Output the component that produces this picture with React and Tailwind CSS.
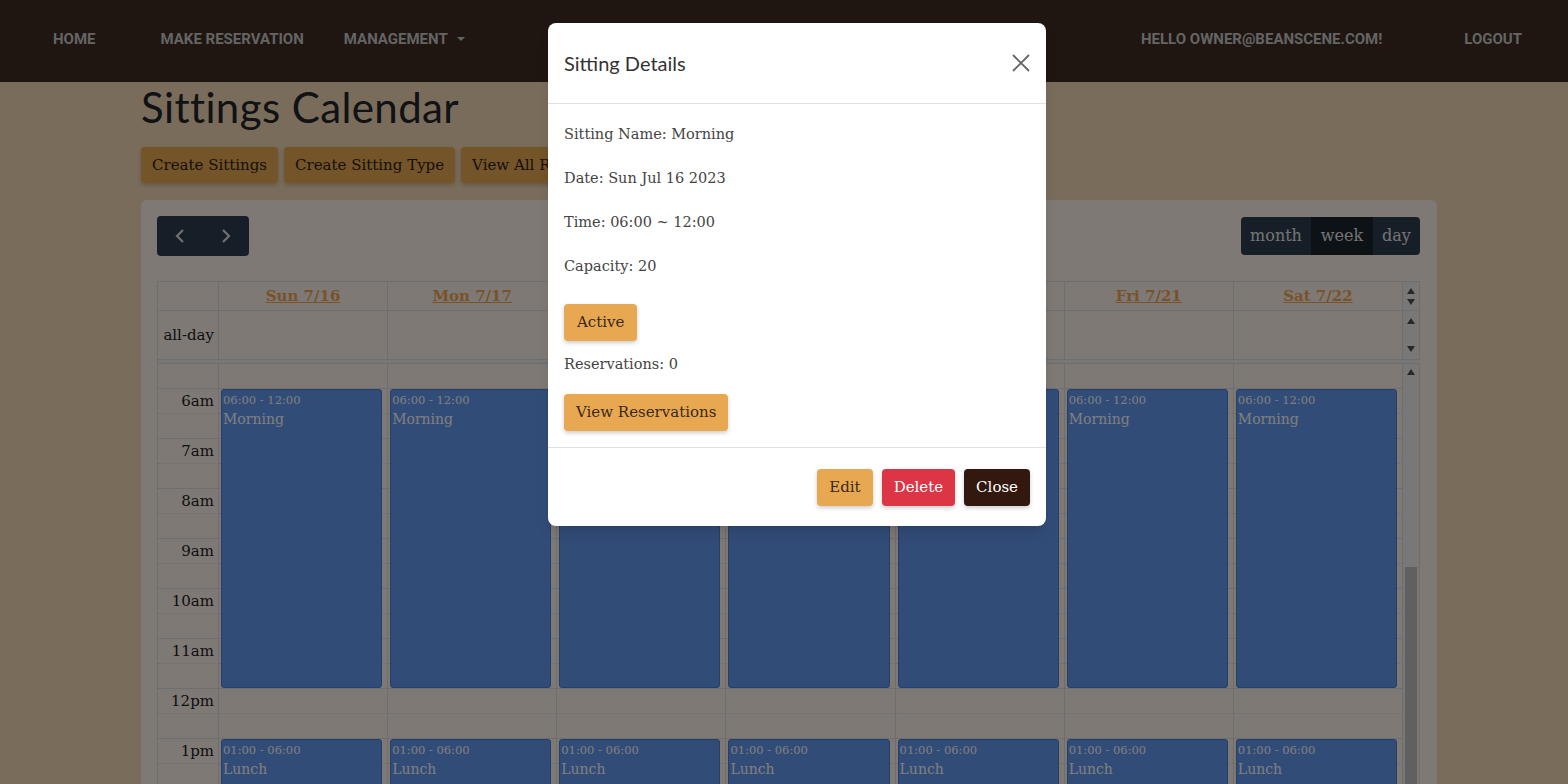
import React from "react";

const serif = { fontFamily: '"DejaVu Serif", "Liberation Serif", serif' };
const sansHead = { fontFamily: 'Lato, "Open Sans", sans-serif' };
const navFont = { fontFamily: 'Roboto, "Open Sans", sans-serif' };

const days = ["Sun 7/16", "Mon 7/17", "Tue 7/18", "Wed 7/19", "Thu 7/20", "Fri 7/21", "Sat 7/22"];
const hours = ["6am", "7am", "8am", "9am", "10am", "11am", "12pm", "1pm", "2pm", "3pm"];

function Event({ time, title, h }) {
  return (
    <div
      className="ml-[2px] mr-[5px] rounded-[3px] border border-[#4a7fd8] bg-[#6498f0] px-[1px] text-white overflow-hidden"
      style={{ height: h }}
    >
      <div className="text-[11.5px] leading-[18px] pt-[1px]" style={serif}>{time}</div>
      <div className="text-[14px] leading-[20px]" style={serif}>{title}</div>
    </div>
  );
}

function Tri({ up }) {
  return (
    <svg width="8" height="6" viewBox="0 0 8 6" className="block">
      {up ? <path d="M0 6 L4 0 L8 6 Z" fill="#505050" /> : <path d="M0 0 L4 6 L8 0 Z" fill="#505050" />}
    </svg>
  );
}

export default function App() {
  return (
    <div className="relative h-screen w-full overflow-hidden bg-[#f4d8b6]">
      {/* Navbar */}
      <nav className="flex h-[82px] items-center bg-[#3e2a22] pb-[4px] text-[15px] font-bold uppercase text-[#c8c8c8]" style={navFont}>
        <span className="ml-[53px]">Home</span>
        <span className="ml-[65px]">Make Reservation</span>
        <span className="ml-[40px] flex items-center">
          Management
          <svg width="10" height="6" viewBox="0 0 10 6" className="ml-[8px]"><path d="M1 1 L5 5 L9 1 Z" fill="#c8c8c8" /></svg>
        </span>
        <span className="ml-auto">Hello owner@beanscene.com!</span>
        <span className="ml-[82px] mr-[46px]">Logout</span>
      </nav>

      {/* Main */}
      <main className="ml-[141px] w-[1296px]">
        <h1 className="h-[65px] pt-[2px] text-[42px] leading-[46px] tracking-[0.4px] text-[#212529]" style={sansHead}>Sittings Calendar</h1>
        <div className="flex gap-[6px]" style={serif}>
          {["Create Sittings", "Create Sitting Type", "View All Reservations", "View All Sittings"].map((b) => (
            <button key={b} className="h-[36px] rounded-[4px] bg-[#e8a852] px-[11px] text-[15px] text-[#2e1f14] shadow-[0_2px_4px_rgba(0,0,0,0.2)]">
              {b}
            </button>
          ))}
        </div>

        {/* Calendar card */}
        <section className="mt-[17px] rounded-[6px] bg-[#fdf3e9] px-[16px] pt-[16px] pr-[17px]">
          <div className="flex items-center justify-between">
            <div className="flex h-[40px] w-[92px] overflow-hidden rounded-[4px] bg-[#2c3e50]">
              <button className="flex flex-1 items-center justify-center">
                <svg width="12" height="16" viewBox="0 0 12 16"><path d="M9 2 L3 8 L9 14" stroke="#e0e0e0" strokeWidth="2.2" fill="none" /></svg>
              </button>
              <button className="flex flex-1 items-center justify-center">
                <svg width="12" height="16" viewBox="0 0 12 16"><path d="M3 2 L9 8 L3 14" stroke="#e0e0e0" strokeWidth="2.2" fill="none" /></svg>
              </button>
            </div>
            <div className="flex h-[38px] overflow-hidden rounded-[4px] text-[16px] text-[#e8e8e8]" style={serif}>
              <span className="flex w-[70px] items-center justify-center bg-[#2c3e50]">month</span>
              <span className="flex w-[62px] items-center justify-center bg-[#1a252f]">week</span>
              <span className="flex w-[47px] items-center justify-center bg-[#2c3e50]">day</span>
            </div>
          </div>

          {/* Grid */}
          <div className="mt-[25px] border-l border-t border-[#dcdcdc]" style={serif}>
            {/* header */}
            <div className="grid h-[29px] grid-cols-[61px_repeat(7,1fr)_17px] border-b border-[#dcdcdc]">
              <div className="border-r border-[#dcdcdc]" />
              {days.map((d) => (
                <div key={d} className="flex items-center justify-center border-r border-[#dcdcdc] text-[15px] font-bold text-[#f0a652] underline">
                  {d}
                </div>
              ))}
              <div className="flex flex-col items-center justify-center gap-[5px] border-r border-[#dcdcdc] bg-[#f1f1f1]">
                <Tri up />
                <Tri />
              </div>
            </div>
            {/* all-day */}
            <div className="grid h-[49px] grid-cols-[61px_repeat(7,1fr)_17px] border-b border-[#dcdcdc]">
              <div className="flex items-center justify-end border-r border-[#dcdcdc] pr-[4px] text-[15px] text-[#222]">all-day</div>
              {days.map((d) => (
                <div key={d} className="border-r border-[#dcdcdc]" />
              ))}
              <div className="flex flex-col items-center justify-between border-r border-[#dcdcdc] bg-[#f1f1f1] py-[7px]">
                <Tri up />
                <Tri />
              </div>
            </div>
            <div className="h-[4px] border-b border-[#dcdcdc] bg-[#eeeeee]" />

            {/* time grid */}
            <div className="grid grid-cols-[61px_repeat(7,1fr)_17px]">
              <div className="border-r border-[#dcdcdc]">
                <div className="h-[25px] border-b border-[#dcdcdc]" />
                {hours.map((h) => (
                  <div key={h} className="h-[50px] border-b border-[#dcdcdc]">
                    <div className="flex h-[25px] items-center justify-end border-b border-dotted border-[#dcdcdc] pr-[4px] text-[15px] text-[#222]">
                      {h}
                    </div>
                  </div>
                ))}
              </div>
              {days.map((d) => (
                <div key={d} className="relative border-r border-[#dcdcdc]">
                  <div className="h-[25px] border-b border-[#dcdcdc]" />
                  {hours.map((h) => (
                    <div key={h} className="h-[50px] border-b border-[#dcdcdc]">
                      <div className="h-[25px] border-b border-dotted border-[#dcdcdc]" />
                    </div>
                  ))}
                  <div className="absolute left-0 right-0 top-[25px]">
                    <Event time="06:00 - 12:00" title="Morning" h={299} />
                  </div>
                  <div className="absolute left-0 right-0 top-[375px]">
                    <Event time="01:00 - 06:00" title="Lunch" h={299} />
                  </div>
                </div>
              ))}
              <div className="relative border-r border-[#dcdcdc] bg-[#f1f1f1]">
                <div className="flex justify-center pt-[5px]"><Tri up /></div>
                <div className="absolute left-[2px] right-[2px] top-[203px] h-[400px] bg-[#c0c0c0]" />
              </div>
            </div>
          </div>
        </section>
      </main>

      {/* Backdrop + modal */}
      <div className="absolute inset-0 bg-black/50">
        <div className="ml-[548px] mt-[23px] w-[498px] rounded-[8px] bg-white shadow-lg">
          <div className="flex h-[81px] items-center justify-between border-b border-[#dee2e6] px-[16px]">
            <h5 className="text-[20px] text-[#333]" style={sansHead}>Sitting Details</h5>
            <svg width="18" height="18" viewBox="0 0 18 18">
              <path d="M1 1 L17 17 M17 1 L1 17" stroke="#666" strokeWidth="1.8" />
            </svg>
          </div>
          <div className="px-[16px] pt-[16px] pb-[16px] text-[14.5px] text-[#444]" style={serif}>
            <p className="mb-[16px] leading-[28px]">Sitting Name: Morning</p>
            <p className="mb-[16px] leading-[28px]">Date: Sun Jul 16 2023</p>
            <p className="mb-[16px] leading-[28px]">Time: 06:00 ~ 12:00</p>
            <p className="mb-[16px] leading-[28px]">Capacity: 20</p>
            <button className="mt-[8px] h-[37px] rounded-[4px] bg-[#e8a852] px-[13px] text-[15px] text-[#3a2818] shadow-[0_2px_4px_rgba(0,0,0,0.2)]">Active</button>
            <p className="mb-[16px] mt-[9px] leading-[28px]">Reservations: 0</p>
            <button className="h-[37px] rounded-[4px] bg-[#e8a852] px-[12px] text-[15px] text-[#3a2818] shadow-[0_2px_4px_rgba(0,0,0,0.2)]">View Reservations</button>
          </div>
          <div className="flex justify-end gap-[9px] border-t border-[#dee2e6] px-[16px] pt-[21px] pb-[20px] text-[15px]" style={serif}>
            <button className="h-[37px] rounded-[4px] bg-[#e8a852] px-[12px] text-[#3a2818] shadow-[0_2px_4px_rgba(0,0,0,0.2)]">Edit</button>
            <button className="h-[37px] rounded-[4px] bg-[#dc3545] px-[12px] text-white shadow-[0_2px_4px_rgba(0,0,0,0.2)]">Delete</button>
            <button className="h-[37px] rounded-[4px] bg-[#331810] px-[12px] text-white shadow-[0_2px_4px_rgba(0,0,0,0.2)]">Close</button>
          </div>
        </div>
      </div>
    </div>
  );
}
